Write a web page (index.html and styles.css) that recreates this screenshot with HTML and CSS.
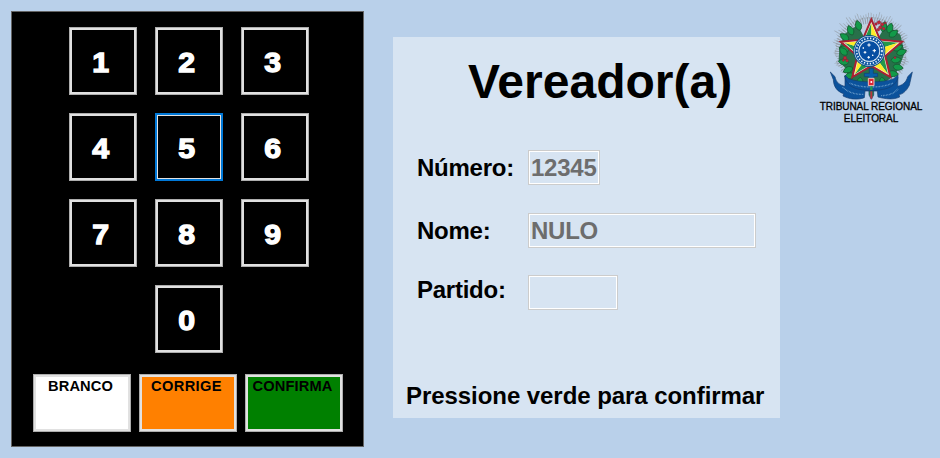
FILE: index.html
```html
<!DOCTYPE html>
<html lang="pt-BR">
<head>
<meta charset="utf-8">
<title>Urna</title>
<link rel="stylesheet" href="styles.css">
</head>
<body>
<div class="window">
  <section class="keypad">
    <div class="keys">
      <button class="key"><span>1</span></button>
      <button class="key"><span>2</span></button>
      <button class="key"><span>3</span></button>
      <button class="key"><span>4</span></button>
      <button class="key key-focused"><span>5</span></button>
      <button class="key"><span>6</span></button>
      <button class="key"><span>7</span></button>
      <button class="key"><span>8</span></button>
      <button class="key"><span>9</span></button>
      <button class="key key-zero"><span>0</span></button>
    </div>
    <div class="actions">
      <button class="action branco">BRANCO</button>
      <button class="action corrige">CORRIGE</button>
      <button class="action confirma">CONFIRMA</button>
    </div>
  </section>

  <main class="screen">
    <h1>Vereador(a)</h1>
    <div class="row row-numero"><span class="label">Número:</span><div class="field numero">12345</div></div>
    <div class="row row-nome"><span class="label">Nome:</span><div class="field nome">NULO</div></div>
    <div class="row row-partido"><span class="label">Partido:</span><div class="field partido"></div></div>
    <p class="hint">Pressione verde para confirmar</p>
  </main>

  <aside class="brand">
    <svg class="emblem" viewBox="0 0 390 303" width="130" height="101" aria-hidden="true">
      <defs>
        <path id="leaf" d="M0 0C-12-7-12-20 0-31C12-20 12-7 0 0Z" fill="#129a49" stroke="#175c33" stroke-width="2.5"/>
        <g id="arm">
          <path d="M0 0V-96L-26-35Z" fill="#23994a"/>
          <path d="M0 0V-96L26-35Z" fill="#ffed28"/>
        </g>
        <clipPath id="burst">
          <path d="M180 36L195 45L211 35L220 50L246 48L248 64L275 74L271 90L296 107L284 124L299 150L286 164L298 190L280 199L277 222L240 226H122L92 216L94 204L72 193L84 178L70 159L80 142L66 122L86 112L70 92L96 88L80 66L110 72L104 46L132 58L136 38L156 49Z"/>
        </clipPath>
      </defs>
      <g fill="none" stroke="#949ca5" clip-path="url(#burst)">
        <path d="M105 245A116 116 0 1 1 259 245" stroke-width="26" stroke-dasharray="2.5 5.5" opacity=".7"/>
        <path d="M108 220A98 96 0 1 1 256 220" stroke-width="20" stroke-dasharray="3 4"/>
        <path d="M114 209A84 82 0 1 1 250 209" stroke="#c9ced3" stroke-width="14" stroke-dasharray="4 3"/>
      </g>
      <path d="M143 75L105 101L88 143L86 181L111 211L112 238L144 250L220 250L255 226L272 190L284 158L271 104L228 75L183 150Z" fill="#28704a"/>
      <g>
        <use href="#leaf" transform="translate(150 91) rotate(-18)"/>
        <use href="#leaf" transform="translate(128 105) rotate(-25)"/>
        <use href="#leaf" transform="translate(116 120) rotate(-54)"/>
        <use href="#leaf" transform="translate(117 151) rotate(-75)"/>
        <use href="#leaf" transform="translate(111 165) rotate(-45)"/>
        <use href="#leaf" transform="translate(116 188) rotate(-82)"/>
        <use href="#leaf" transform="translate(128 203) rotate(-115)"/>
        <use href="#leaf" transform="translate(134 225) rotate(-100)"/>
        <use href="#leaf" transform="translate(217 95) rotate(16)"/>
        <use href="#leaf" transform="translate(235 99) rotate(18)"/>
        <use href="#leaf" transform="translate(238 110) rotate(53)"/>
        <use href="#leaf" transform="translate(249 149) rotate(68)"/>
        <use href="#leaf" transform="translate(260 162) rotate(70)"/>
        <use href="#leaf" transform="translate(243 181) rotate(85)"/>
        <use href="#leaf" transform="translate(249 199) rotate(101)"/>
        <use href="#leaf" transform="translate(234 219) rotate(98)"/>
        <use href="#leaf" transform="translate(151 232) rotate(185)"/>
        <use href="#leaf" transform="translate(215 232) rotate(170)"/>
      </g>
      <g fill="#c22638" stroke="#7e253b" stroke-width="1.5">
        <circle cx="198" cy="72" r="4"/><circle cx="207" cy="67" r="5"/><circle cx="217" cy="73" r="5"/>
        <circle cx="211" cy="82" r="5"/><circle cx="221" cy="86" r="4"/><circle cx="205" cy="89" r="4"/>
        <circle cx="226" cy="69" r="3"/><circle cx="105" cy="174" r="5"/><circle cx="111" cy="182" r="4"/>
        <circle cx="100" cy="181" r="3"/><circle cx="255" cy="173" r="3"/>
      </g>
      <g transform="translate(184 154)">
        <path d="M0-96L26-35L92-29L42 14L57 77L0 44L-57 77L-42 14L-92-29L-26-35Z" fill="#f7e8dd" stroke="#a82132" stroke-width="6"/>
        <g transform="scale(.88)">
          <use href="#arm"/><use href="#arm" transform="rotate(72)"/><use href="#arm" transform="rotate(144)"/>
          <use href="#arm" transform="rotate(216)"/><use href="#arm" transform="rotate(288)"/>
        </g>
      </g>
      <circle cx="178" cy="153" r="48" fill="#094f8c"/>
      <circle cx="178" cy="153" r="45" fill="#fff"/>
      <circle cx="178" cy="153" r="38" fill="none" stroke="#0b529f" stroke-width="11"/>
      <circle cx="178" cy="153" r="38" fill="none" stroke="#e5f5ff" stroke-width="5" stroke-dasharray="4 5"/>
      <circle cx="178" cy="153" r="31" fill="#064ea2" stroke="#dceaf5" stroke-width="2"/>
      <path d="M177 130v10M172 135h10M165 153v8M161 157h8M193 147v10M188 152h10M176 168v8M172 172h8M160 142v4M158 144h4M188 164v4M186 166h4" stroke="#fff" stroke-width="3"/>
      <g stroke="#173b6e" stroke-width="2">
        <path d="M178 205h12v15h13v10h-12v35h-15v-35h-13v-10h15Z" fill="#0860a8"/>
        <path d="M176 236h15v49l-7 13l-7-13Z" fill="#168347"/>
      </g>
      <path d="M61 216L75 230C78 248 91 256 105 259L105 225L116 236C150 249 218 249 251 236L264 225L263 259C279 255 289 246 293 230L307 216L298 256C287 278 273 284 267 283L269 291C249 300 227 297 204 291L202 273H165L163 293C141 301 117 297 99 288L101 281C82 275 71 261 70 239Z" fill="#0b529c" stroke="#153d70" stroke-width="2"/>
      <path d="M105 232C108 248 120 260 140 266C163 273 204 273 228 266C249 260 261 247 264 232" fill="none" stroke="#143c71" stroke-width="2"/>
      <path d="M119 249C150 265 217 265 249 249M98 262C118 279 139 284 161 283M214 287Q247 286 264 267" fill="none" stroke="#b2d4ec" stroke-width="4" stroke-dasharray="2 2.5" opacity=".7"/>
      <path d="M175 235h17v22h-17Z" fill="#db2735" stroke="#efc5b8" stroke-width="3"/>
      <circle cx="184" cy="246" r="3" fill="#fff"/>
      <path d="M184 259v11" stroke="#23994a" stroke-width="7"/>
      <path d="M184 274v22" stroke="#bc3442" stroke-width="6"/>
    </svg>
    <p>TRIBUNAL REGIONAL<br>ELEITORAL</p>
  </aside>
</div>
</body>
</html>
```
FILE: styles.css
```css
* { box-sizing: border-box; }

body {
  margin: 0;
  background: #b9d0ea;
  color: #000;
  font-family: "Liberation Sans", Arial, sans-serif;
}

h1, p { margin: 0; }

.window {
  display: flex;
  align-items: flex-start;
  width: 940px;
  height: 458px;
  overflow: hidden;
}

button {
  margin: 0;
  padding: 0;
  border: 1px solid #adadad;
  border-radius: 0;
  box-shadow: inset 0 0 0 2px #e1e1e1;
  font-family: inherit;
  font-weight: bold;
}

.keypad {
  flex: none;
  width: 353px;
  height: 436px;
  margin: 11px 0 0 11px;
  padding: 15px 0 0;
  border: 1px solid #646464;
  background: #000;
}

.keys {
  display: grid;
  grid-template-columns: repeat(3, 68px);
  grid-auto-rows: 68px;
  gap: 18px;
  margin-left: 57px;
}

.key {
  display: flex;
  align-items: center;
  justify-content: center;
  padding: 3px 4px 0 0;
  background: #000;
  color: #fff;
  font-size: 27.5px;
  line-height: 32px;
  -webkit-text-stroke: 1.3px #fff;
}

.key span { transform: scaleX(1.1); }

.key-focused {
  border: 2px solid #0078d7;
  box-shadow: inset 0 0 0 1px #e1e1e1;
}

.key-zero { grid-column: 2; }

.actions {
  display: flex;
  gap: 8px;
  margin: 21px 0 0 21px;
}

.action {
  display: flex;
  justify-content: center;
  width: 98px;
  height: 58px;
  padding: 3px 3px 0 0;
  font-size: 14.67px;
  line-height: 17px;
  letter-spacing: .1px;
  color: #000;
}

.branco { background: #fff; }
.corrige { background: #ff8000; letter-spacing: .35px; }
.confirma { background: #008000; }

.screen {
  flex: none;
  width: 387px;
  height: 381px;
  margin: 37px 0 0 29px;
  background: #d7e4f2;
  font-weight: bold;
  font-size: 24px;
}

h1 {
  height: 113px;
  padding: 17px 0 0 75px;
  font-size: 48px;
  line-height: 55px;
  white-space: nowrap;
}

.row {
  display: flex;
  height: 35px;
  padding-left: 24px;
  line-height: 28px;
  letter-spacing: -.25px;
}

.row-nome { margin-top: 28px; }
.row-partido { margin-top: 27px; }

.label {
  width: 111px;
  padding-top: 4px;
}

.row-partido .label { padding-top: 1px; }

.field {
  height: 35px;
  padding: 3px 0 0 2px;
  border: 1px solid #ccc;
  box-shadow: inset 0 0 0 1px #fff;
  color: #6d6d6d;
}

.numero { width: 72px; }
.nome { width: 228px; }
.partido { width: 90px; }

.hint {
  margin-top: 72px;
  padding-left: 13px;
  line-height: 28px;
  letter-spacing: -.06px;
  white-space: nowrap;
}

.brand {
  flex: none;
  width: 130px;
  margin-left: 30px;
}

.emblem { display: block; }

.brand p {
  width: 122px;
  font-size: 10px;
  line-height: 12px;
  letter-spacing: -.06px;
  text-align: center;
  white-space: nowrap;
  -webkit-text-stroke: 0.3px #000;
}
```
